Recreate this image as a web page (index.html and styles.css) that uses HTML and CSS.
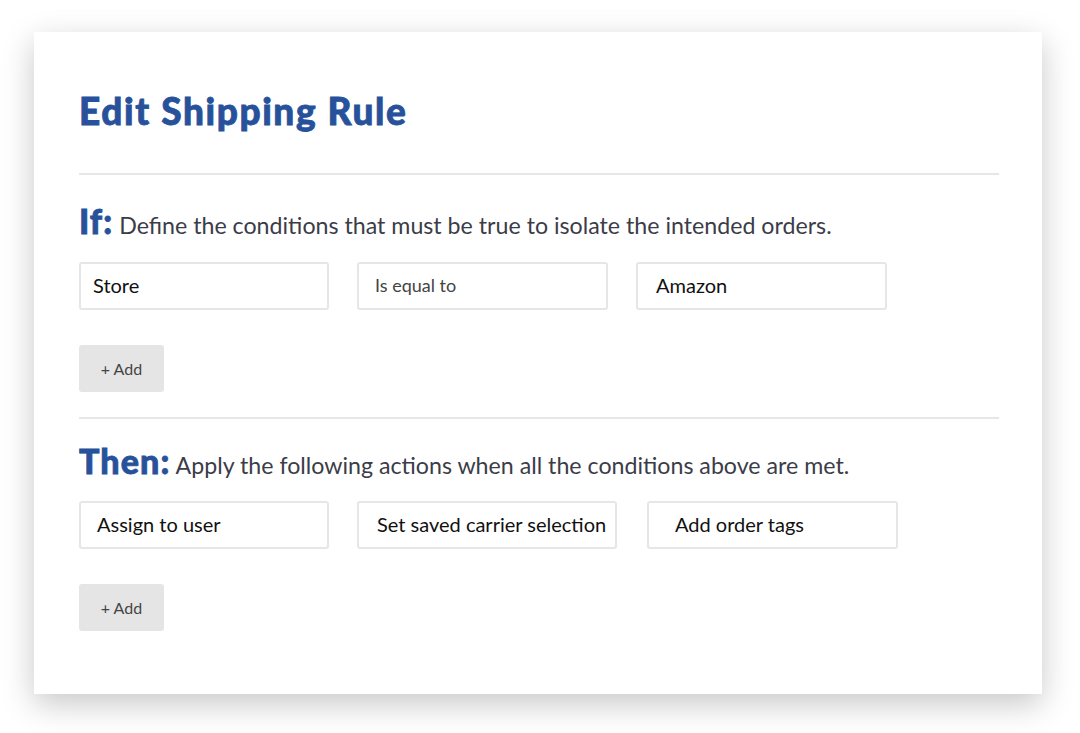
FILE: index.html
```html
<!DOCTYPE html>
<html>
<head>
<meta charset="utf-8">
<link rel="stylesheet" href="styles.css">
</head>
<body>
<div class="card">
  <h1 class="title">Edit Shipping Rule</h1>
  <hr class="divider first">
  <section class="section">
    <h2 class="heading"><span class="kw">If:</span> Define the conditions that must be true to isolate the intended orders.</h2>
    <div class="fields">
      <div class="field w250 p12">Store</div>
      <div class="field w251 small">Is equal to</div>
      <div class="field w251 p18">Amazon</div>
    </div>
    <button class="add">+ Add</button>
  </section>
  <hr class="divider">
  <section class="section then">
    <h2 class="heading"><span class="kw">Then:</span> Apply the following actions when all the conditions above are met.</h2>
    <div class="fields">
      <div class="field w250 p16">Assign to user</div>
      <div class="field w260 p18">Set saved carrier selection</div>
      <div class="field w251 p26 shift">Add order tags</div>
    </div>
    <button class="add">+ Add</button>
  </section>
</div>
</body>
</html>
```
FILE: styles.css
```css
html, body { margin: 0; padding: 0; background: #ffffff; }
body {
  font-family: Lato, "Noto Sans", sans-serif;
  min-height: 733px;
  padding-top: 32px;
  box-sizing: border-box;
}
.card {
  margin-left: 34px;
  width: 1008px;
  height: 662px;
  box-sizing: border-box;
  background: #fff;
  box-shadow: 0 10px 30px rgba(0,0,0,0.22);
  padding: 57px 43px 0 45px;
}
.title {
  margin: 0;
  margin-top: -2px;
  font-size: 37px;
  font-weight: 900;
  letter-spacing: 1.6px;
  -webkit-text-stroke: 0.8px #27519a;
  color: #27519a;
  line-height: 48px;
}
.divider {
  border: 0;
  height: 2px;
  background: #e6e6e6;
  margin: 25px 0 0 0;
}
.divider.first { margin-top: 38px; }
.section { padding-top: 26px; }
.section.then { padding-top: 22px; }
.heading {
  margin: 0;
  font-weight: 400;
  font-size: 23.2px;
  color: #3b3c48;
  line-height: 40px;
  height: 40px;
}
.kw {
  font-weight: 900;
  font-size: 34px;
  letter-spacing: 1.1px;
  -webkit-text-stroke: 0.8px #27519a;
  color: #27519a;
}
.fields {
  display: flex;
  gap: 28px;
  margin-top: 21px;
}
.then .fields { margin-top: 20px; }
.field {
  box-sizing: border-box;
  height: 48px;
  border: 2px solid #e6e6e6;
  border-radius: 3px;
  display: flex;
  align-items: center;
  padding-bottom: 3px;
  font-size: 20px;
  color: #111;
}
.w250 { width: 250px; }
.w251 { width: 251px; }
.w260 { width: 260px; }
.p12 { padding-left: 12px; }
.p16 { padding-left: 16px; }
.p18 { padding-left: 18px; }
.p26 { padding-left: 26px; }
.shift { margin-left: 2px; }
.small { font-size: 18px; color: #444; padding-left: 16px; }
.add {
  display: block;
  margin-top: 35px;
  width: 85px;
  height: 47px;
  border: 0;
  border-radius: 3px;
  background: #e5e5e5;
  font-family: Lato, "Noto Sans", sans-serif;
  font-size: 16px;
  color: #444;
  padding: 0 0 1px 0;
}
```
